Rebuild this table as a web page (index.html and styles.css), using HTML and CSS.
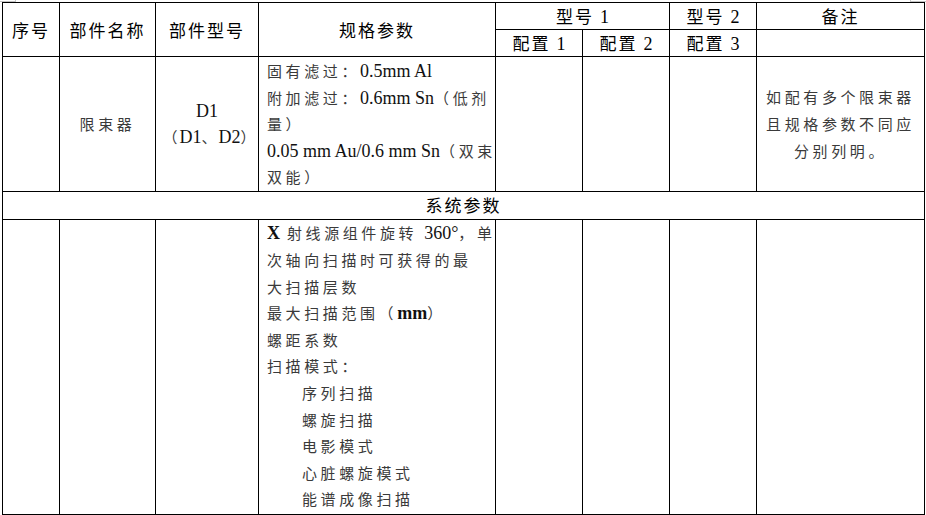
FILE: index.html
```html
<!DOCTYPE html>
<html lang="zh-CN">
<head>
<meta charset="utf-8">
<title>部件规格参数表</title>
<link rel="stylesheet" href="styles.css">
</head>
<body>
<div class="page">
  <span class="mark mark-left"></span>
  <span class="mark mark-right"></span>
  <table class="spec">
    <colgroup>
      <col class="c-no">
      <col class="c-name">
      <col class="c-model">
      <col class="c-param">
      <col class="c-cfg">
      <col class="c-cfg">
      <col class="c-cfg">
      <col class="c-note">
    </colgroup>
    <thead>
      <tr class="h1">
        <th rowspan="2">序号</th>
        <th rowspan="2">部件名称</th>
        <th rowspan="2">部件型号</th>
        <th rowspan="2">规格参数</th>
        <th colspan="2">型号 <span class="en">1</span></th>
        <th>型号 <span class="en">2</span></th>
        <th>备注</th>
      </tr>
      <tr class="h2">
        <th>配置 <span class="en">1</span></th>
        <th>配置 <span class="en">2</span></th>
        <th>配置 <span class="en">3</span></th>
        <th></th>
      </tr>
    </thead>
    <tbody>
      <tr class="r1">
        <td></td>
        <td class="mid">限束器</td>
        <td class="mid"><span class="en">D1</span><br><span class="alt">（<span class="en">D1</span>、<span class="en">D2</span>）</span></td>
        <td class="params">
          <div class="ln">固有滤过：<span class="en">0.5mm Al</span></div>
          <div class="ln">附加滤过：<span class="en">0.6mm Sn</span>（低剂</div>
          <div class="ln">量）</div>
          <div class="ln"><span class="en">0.05 mm Au/0.6 mm Sn</span>（双束</div>
          <div class="ln">双能）</div>
        </td>
        <td></td>
        <td></td>
        <td></td>
        <td class="mid note">如配有多个限束器<br>且规格参数不同应<br>分别列明。</td>
      </tr>
      <tr class="sect">
        <th colspan="8">系统参数</th>
      </tr>
      <tr class="r3">
        <td></td>
        <td></td>
        <td></td>
        <td class="params params-sys">
          <div class="ln"><span class="en b">X</span> 射线源组件旋转 <span class="en">360°</span>，单</div>
          <div class="ln">次轴向扫描时可获得的最</div>
          <div class="ln">大扫描层数</div>
          <div class="ln">最大扫描范围（<span class="en b">mm</span>）</div>
          <div class="ln">螺距系数</div>
          <div class="ln">扫描模式：</div>
          <div class="ln sub">序列扫描</div>
          <div class="ln sub">螺旋扫描</div>
          <div class="ln sub">电影模式</div>
          <div class="ln sub">心脏螺旋模式</div>
          <div class="ln sub">能谱成像扫描</div>
        </td>
        <td></td>
        <td></td>
        <td></td>
        <td></td>
      </tr>
    </tbody>
  </table>
  <p class="after">注：表中所列各项参数均应按投标产品的实际配置逐项如实填写，如有不同配置应分别列明。</p>
</div>
</body>
</html>
```

FILE: styles.css
```css
html, body {
  margin: 0;
  padding: 0;
  background: #ffffff;
}

body {
  font-family: "Noto Sans CJK SC", "Noto Sans", sans-serif;
  color: #111111;
  overflow: hidden;
  width: 926px;
  height: 515px;
}

.page {
  position: relative;
  padding: 2px 0 0 2px;
}

.mark {
  position: absolute;
  top: 0;
  height: 1px;
  border-color: #c4c4c4;
  border-style: solid;
  border-width: 0;
}

.mark-left {
  left: 0;
  width: 15px;
  border-bottom-width: 1px;
  border-right-width: 1px;
}

.mark-right {
  left: 910px;
  width: 15px;
  border-bottom-width: 1px;
  border-left-width: 1px;
}

.spec {
  border-collapse: collapse;
  table-layout: fixed;
  width: 922px;
}

.c-no { width: 57px; }
.c-name { width: 96px; }
.c-model { width: 103px; }
.c-param { width: 237px; }
.c-cfg { width: 87px; }
.c-note { width: 168px; }

.spec th,
.spec td {
  border: 1px solid #000000;
  padding: 0;
  overflow: hidden;
}

.spec th {
  font-weight: 400;
  font-size: 17px;
  letter-spacing: 2px;
  color: #000000;
  text-align: center;
  vertical-align: middle;
  line-height: 22px;
  white-space: nowrap;
}

.h1 th,
.h2 th {
  height: 26px;
}

.sect th {
  height: 26px;
  padding-bottom: 1px;
}

.spec td {
  font-size: 15px;
  letter-spacing: 3.6px;
  color: #3a3a3a;
  line-height: 26.6px;
  vertical-align: top;
  white-space: nowrap;
}

.en {
  font-family: "Liberation Serif", "Times New Roman", serif;
  font-size: 18px;
  letter-spacing: 0;
  line-height: 1;
  color: #111111;
}

.spec th .en {
  color: #000000;
}

.en.b {
  font-weight: 700;
}

.mid {
  text-align: center;
  vertical-align: middle !important;
}

.alt {
  letter-spacing: 2px;
  padding-left: 6px;
}

.params {
  padding: 1px 0 0.5px 8px !important;
}

.params-sys {
  padding-top: 0 !important;
}

.ln {
  height: 26.6px;
}

.ln.sub {
  padding-left: 35px;
}

.after {
  margin: 0;
  width: 866px;
  padding-left: 60px;
  overflow: hidden;
  font-size: 15px;
  line-height: 16px;
  letter-spacing: 3.6px;
  color: #333333;
  white-space: nowrap;
}
```
